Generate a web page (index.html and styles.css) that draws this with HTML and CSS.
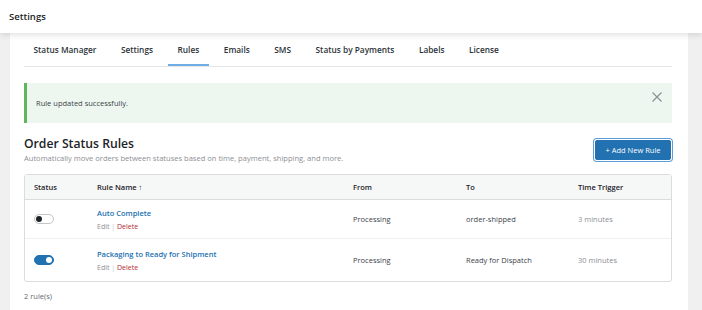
FILE: index.html
```html
<!DOCTYPE html>
<html lang="en">
<head>
    <meta charset="UTF-8">
    <meta name="viewport" content="width=device-width, initial-scale=1.0">
    <title>Settings</title>
    <link rel="stylesheet" href="styles.css">
</head>
<body>
    <!-- Top bar -->
    <header class="topbar">Settings</header>

    <div class="wrap">
        <div class="panel">
            <!-- Tabs -->
            <nav class="tabs">
                <a class="tab">Status Manager</a>
                <a class="tab">Settings</a>
                <a class="tab active">Rules</a>
                <a class="tab">Emails</a>
                <a class="tab">SMS</a>
                <a class="tab">Status by Payments</a>
                <a class="tab">Labels</a>
                <a class="tab">License</a>
            </nav>

            <!-- Notice -->
            <div class="notice">
                <p>Rule updated successfully.</p>
                <button class="notice-close" aria-label="Dismiss">
                    <svg width="10" height="10" viewBox="0 0 10 10"><path d="M0.5 0.5L9.5 9.5M9.5 0.5L0.5 9.5" stroke="#8c8f94" stroke-width="1.2" fill="none"/></svg>
                </button>
            </div>

            <!-- Heading -->
            <div class="page-head">
                <div>
                    <h1>Order Status Rules</h1>
                    <p class="desc">Automatically move orders between statuses based on time, payment, shipping, and more.</p>
                </div>
                <button class="btn-primary">+ Add New Rule</button>
            </div>

            <!-- Rules table -->
            <table class="rules-table">
                <colgroup>
                    <col class="c-status">
                    <col class="c-name">
                    <col class="c-from">
                    <col class="c-to">
                    <col>
                </colgroup>
                <thead>
                    <tr>
                        <th>Status</th>
                        <th>Rule Name <span class="sort">&#8593;</span></th>
                        <th>From</th>
                        <th>To</th>
                        <th>Time Trigger</th>
                    </tr>
                </thead>
                <tbody>
                    <tr>
                        <td><span class="toggle"></span></td>
                        <td>
                            <a class="rule-name">Auto Complete</a>
                            <div class="row-actions"><a class="edit">Edit</a> <span class="sep">|</span> <a class="delete">Delete</a></div>
                        </td>
                        <td>Processing</td>
                        <td>order-shipped</td>
                        <td class="muted">3 minutes</td>
                    </tr>
                    <tr>
                        <td><span class="toggle on"></span></td>
                        <td>
                            <a class="rule-name">Packaging to Ready for Shipment</a>
                            <div class="row-actions"><a class="edit">Edit</a> <span class="sep">|</span> <a class="delete">Delete</a></div>
                        </td>
                        <td>Processing</td>
                        <td>Ready for Dispatch</td>
                        <td class="muted">30 minutes</td>
                    </tr>
                </tbody>
            </table>

            <p class="count">2 rule(s)</p>
        </div>
    </div>
</body>
</html>
```

FILE: styles.css
```css
body {
    margin: 0;
    font-family: "Open Sans", "Noto Sans", sans-serif;
    background-color: #f0f0f1;
    color: #1d2327;
    font-size: 8px;
}

.topbar {
    position: relative;
    z-index: 2;
    height: 33px;
    line-height: 33px;
    padding-left: 9px;
    background-color: #fff;
    font-size: 9.5px;
    font-weight: 600;
    box-shadow: 0 2px 6px rgba(0,0,0,0.12);
}

.wrap {
    padding: 0 14px 0 10px;
}

.panel {
    background-color: #fff;
    padding: 0 16px 20px 14px;
}

/* Tabs */
.tabs {
    display: flex;
    gap: 5.5px;
    border-bottom: 1px solid #e5e5e5;
}

.tab {
    padding: 11px 9.5px 8px;
    line-height: 12px;
    font-size: 8.3px;
    font-weight: 600;
    color: #2c3338;
    border-bottom: 2px solid transparent;
}

.tab.active {
    border-bottom-color: #72aee6;
}

/* Notice */
.notice {
    display: flex;
    justify-content: space-between;
    align-items: flex-start;
    margin-top: 16px;
    height: 40px;
    background-color: #edf7ef;
    border-left: 3px solid #5cb85c;
    box-sizing: border-box;
}

.notice p {
    margin: 0;
    padding-left: 9px;
    line-height: 40px;
    font-size: 7.5px;
    color: #3c434a;
}

.notice-close {
    background: none;
    border: none;
    padding: 0;
    margin: 7px 10px 0 0;
    width: 10px;
    height: 10px;
}

/* Heading */
.page-head {
    display: flex;
    justify-content: space-between;
    align-items: center;
    margin-top: 12px;
}

h1 {
    margin: 0;
    font-size: 12.2px;
    font-weight: 600;
    line-height: 17px;
}

.desc {
    margin: 1px 0 0;
    font-size: 7.55px;
    color: #8c8f94;
    line-height: 11px;
}

.btn-primary {
    background-color: #2271b1;
    color: #fff;
    border: 1px solid #2271b1;
    border-radius: 2px;
    box-shadow: 0 0 0 1px #fff, 0 0 0 2px #5b9dd9;
    font-family: inherit;
    font-size: 7.5px;
    height: 20px;
    width: 76px;
    padding: 0;
    margin-right: 1px;
}

/* Table */
.rules-table {
    width: 100%;
    margin-top: 10px;
    border-collapse: separate;
    border-spacing: 0;
    border: 1px solid #dcdcde;
    border-radius: 3px;
    table-layout: fixed;
}

.c-status { width: 63px; }
.c-name { width: 256px; }
.c-from { width: 113px; }
.c-to { width: 112px; }

.rules-table th {
    background-color: #f6f7f7;
    text-align: left;
    font-weight: 600;
    font-size: 7.5px;
    height: 24px;
    padding: 0 9px;
    border-bottom: 1px solid #dcdcde;
}

.rules-table td {
    padding: 0 9px;
    height: 42px;
    font-size: 7.5px;
    color: #3c434a;
    vertical-align: middle;
}

.rules-table tbody tr:first-child td {
    height: 38px;
    border-bottom: 1px solid #f0f0f1;
}

.sort {
    font-weight: 400;
}

.muted {
    color: #8c8f94 !important;
}

.rule-name {
    color: #2271b1;
    font-weight: 600;
    display: block;
    line-height: 12px;
}

.row-actions {
    margin-top: 2px;
    line-height: 11px;
    font-size: 7px;
}

.edit { color: #8c8f94; }
.sep { color: #c3c4c7; }
.delete { color: #b32d2e; }

/* Toggle switch */
.toggle {
    display: block;
    position: relative;
    width: 20px;
    height: 10px;
    box-sizing: border-box;
    border: 1px solid #c3c4c7;
    border-radius: 5px;
    background-color: #fff;
}

.toggle::after {
    content: "";
    position: absolute;
    left: 1px;
    top: 1px;
    width: 6px;
    height: 6px;
    border-radius: 50%;
    background-color: #1d2327;
}

.toggle.on {
    background-color: #2271b1;
    border-color: #2271b1;
}

.toggle.on::after {
    left: auto;
    right: 1px;
    background-color: #fff;
}

.count {
    margin: 9px 0 0;
    font-size: 7.5px;
    color: #646970;
}
```
